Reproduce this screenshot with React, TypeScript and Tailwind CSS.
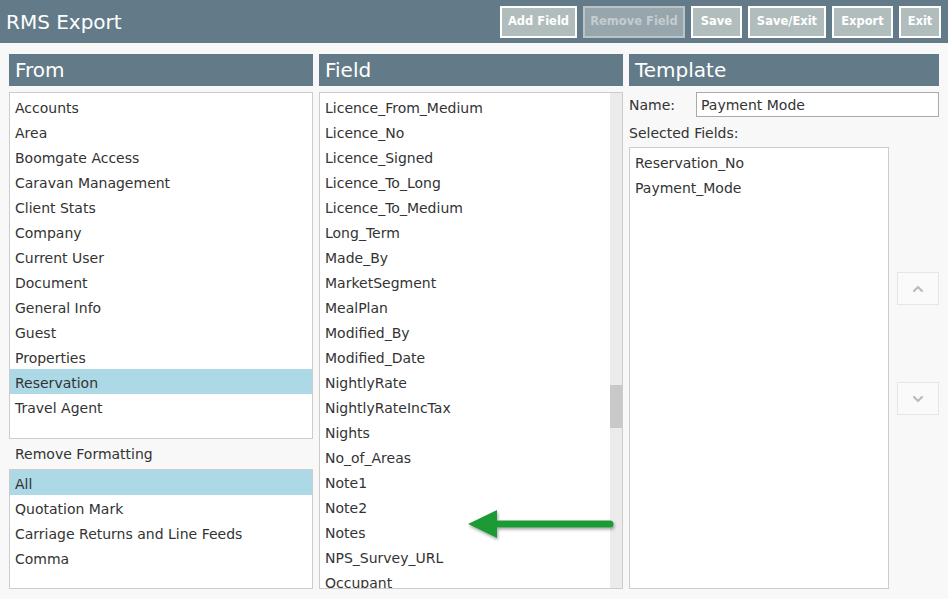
import { ChevronUp, ChevronDown } from 'lucide-react';

const fromItems = [
  'Accounts',
  'Area',
  'Boomgate Access',
  'Caravan Management',
  'Client Stats',
  'Company',
  'Current User',
  'Document',
  'General Info',
  'Guest',
  'Properties',
  'Reservation',
  'Travel Agent',
];

const formatItems = ['All', 'Quotation Mark', 'Carriage Returns and Line Feeds', 'Comma'];

const fieldItems = [
  'Licence_From_Medium',
  'Licence_No',
  'Licence_Signed',
  'Licence_To_Long',
  'Licence_To_Medium',
  'Long_Term',
  'Made_By',
  'MarketSegment',
  'MealPlan',
  'Modified_By',
  'Modified_Date',
  'NightlyRate',
  'NightlyRateIncTax',
  'Nights',
  'No_of_Areas',
  'Note1',
  'Note2',
  'Notes',
  'NPS_Survey_URL',
  'Occupant',
];

const buttons = [
  { label: 'Add Field', w: 'w-[77px]' },
  { label: 'Remove Field', w: 'w-[102px]', disabled: true },
  { label: 'Save', w: 'w-[51px]' },
  { label: 'Save/Exit', w: 'w-[78px]' },
  { label: 'Export', w: 'w-[61px]' },
  { label: 'Exit', w: 'w-[42px]' },
];

function ListItem({ text, selected }: { text: string; selected?: boolean }) {
  return (
    <div className={`h-[25px] flex items-center pt-[3px] pl-[5px] whitespace-nowrap ${selected ? 'bg-[#add8e6]' : ''}`}>
      {text}
    </div>
  );
}

function ColumnHeader({ title }: { title: string }) {
  return (
    <div className="h-[32px] bg-[#637b88] text-white text-[20px] flex items-center pl-[6px]">{title}</div>
  );
}

export default function App() {
  return (
    <div
      className="relative w-[948px] h-[599px] overflow-hidden bg-[#f8f8f8] text-[14px] text-[#333]"
      style={{ fontFamily: '"DejaVu Sans", Verdana, sans-serif' }}
    >
      <div className="h-[43px] bg-[#637b88] flex items-center justify-between pl-[6px] pr-[7px]">
        <span className="text-white text-[20px]">RMS Export</span>
        <div className="flex gap-[6px]">
          {buttons.map((b) => (
            <div
              key={b.label}
              className={`${b.w} h-[32px] border-2 flex items-center justify-center text-[11.5px] font-bold ${
                b.disabled
                  ? 'bg-[#97a6ac] border-[#b9c4c7] text-[#c3ccd0]'
                  : 'bg-[#b1bdbd] border-white text-white'
              }`}
            >
              {b.label}
            </div>
          ))}
        </div>
      </div>

      <div className="flex gap-[6px] px-[9px] pt-[11px]">
        <div className="w-[304px] flex flex-col">
          <ColumnHeader title="From" />
          <div className="mt-[6px] h-[347px] bg-white border border-[#cccccc] py-px">
            {fromItems.map((t) => (
              <ListItem key={t} text={t} selected={t === 'Reservation'} />
            ))}
          </div>
          <div className="h-[30px] flex items-center pl-[6px]">Remove Formatting</div>
          <div className="h-[120px] bg-white border border-[#cccccc]">
            {formatItems.map((t) => (
              <ListItem key={t} text={t} selected={t === 'All'} />
            ))}
          </div>
        </div>

        <div className="w-[304px] flex flex-col">
          <ColumnHeader title="Field" />
          <div className="mt-[6px] h-[497px] bg-white border border-[#cccccc] flex overflow-hidden">
            <div className="flex-1 pt-px overflow-hidden">
              {fieldItems.map((t) => (
                <ListItem key={t} text={t} />
              ))}
            </div>
            <div className="w-[12px] bg-[#ebebeb] flex flex-col">
              <div className="h-[292px]" />
              <div className="h-[43px] bg-[#c9c9c9]" />
            </div>
          </div>
        </div>

        <div className="w-[310px] flex flex-col">
          <ColumnHeader title="Template" />
          <div className="mt-[6px] flex items-center h-[25px]">
            <span className="w-[67px] pt-px">Name:</span>
            <div className="flex-1 h-[25px] bg-white border border-[#aaaaaa] flex items-center pt-px pl-[4px]">
              Payment Mode
            </div>
          </div>
          <div className="h-[30px] flex items-center pt-[2px]">Selected Fields:</div>
          <div className="flex">
            <div className="w-[260px] h-[442px] bg-white border border-[#cccccc] py-px">
              <ListItem text="Reservation_No" />
              <ListItem text="Payment_Mode" />
            </div>
            <div className="flex-1 flex flex-col items-end pt-[125px]">
              <div className="w-[42px] h-[33px] border border-[#e6e6e6] bg-[#fafafa] flex items-center justify-center">
                <ChevronUp size={16} strokeWidth={3.5} className="text-[#bdbdbd]" />
              </div>
              <div className="w-[42px] h-[33px] mt-[77px] border border-[#e6e6e6] bg-[#fafafa] flex items-center justify-center">
                <ChevronDown size={16} strokeWidth={3.5} className="text-[#bdbdbd]" />
              </div>
            </div>
          </div>
        </div>
      </div>

      <svg className="absolute left-[462px] top-[505px]" width="160" height="42" viewBox="0 0 160 42">
        <defs>
          <filter id="sh" x="-10%" y="-30%" width="130%" height="170%">
            <feDropShadow dx="1" dy="2" stdDeviation="1.5" floodColor="#000" floodOpacity="0.35" />
          </filter>
        </defs>
        <g filter="url(#sh)">
          <line x1="30" y1="19" x2="148" y2="19" stroke="#1f9a35" strokeWidth="7" strokeLinecap="round" />
          <polygon points="6,19 35,5 35,33" fill="#1f9a35" />
        </g>
      </svg>
    </div>
  );
}
